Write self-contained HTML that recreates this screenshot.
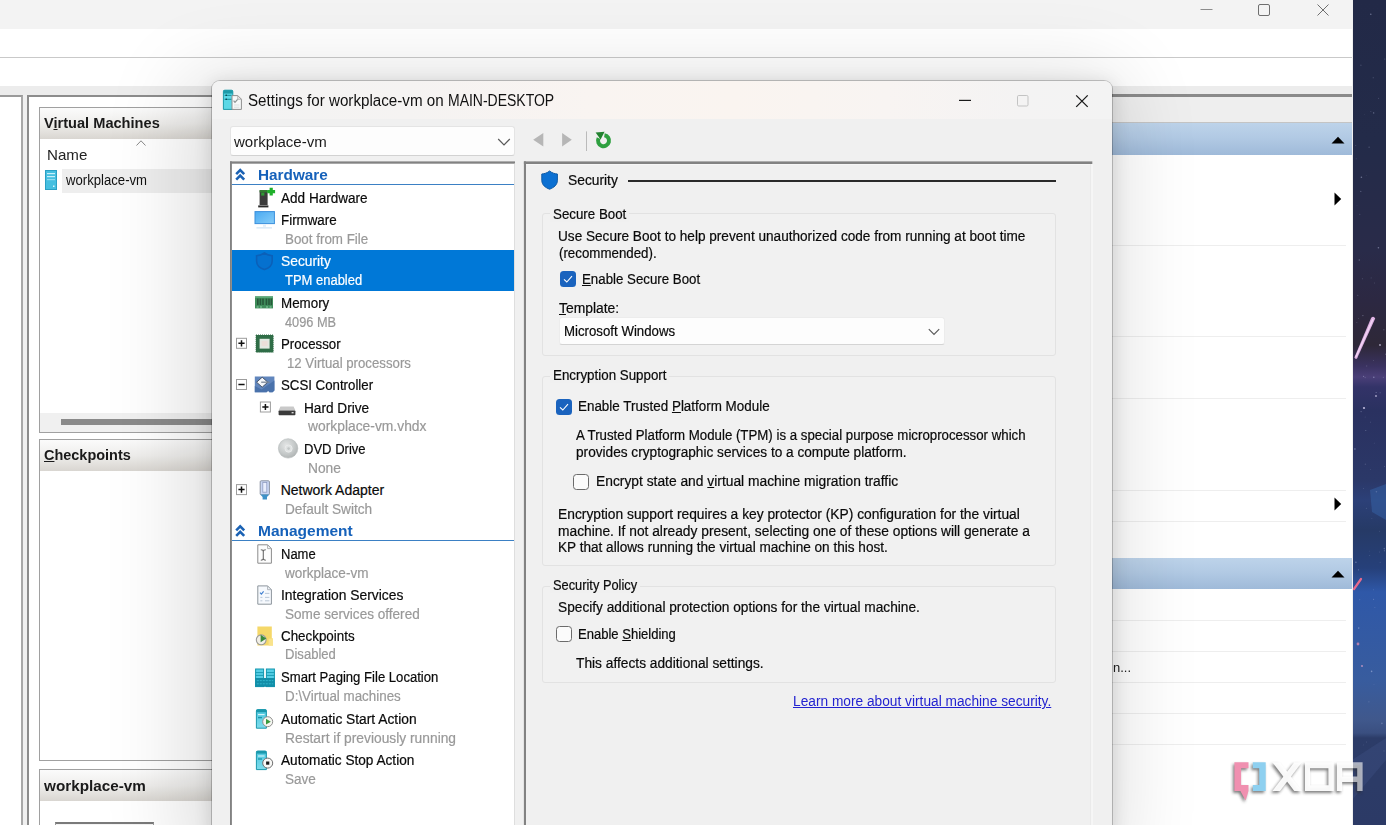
<!DOCTYPE html>
<html>
<head>
<meta charset="utf-8">
<title>Settings for workplace-vm on MAIN-DESKTOP</title>
<style>
html,body{margin:0;padding:0;}
body{width:1386px;height:825px;overflow:hidden;position:relative;background:#1d2442;font-family:"Liberation Sans",sans-serif;font-size:13px;color:#111;}
.abs{position:absolute;}
.t{position:absolute;white-space:nowrap;line-height:16px;height:16px;transform-origin:0 0;}
/* wallpaper */
#wall{left:1352px;top:0;width:34px;height:825px;background:linear-gradient(180deg,#1b2340 0%,#1f2644 25%,#2b2a4b 42%,#26315a 55%,#2a4a83 72%,#2c4f8a 85%,#3a4a78 100%);}
/* main window */
#main{left:0;top:0;width:1353px;height:825px;background:#f0f0f0;overflow:hidden;}
#mtitle{left:0;top:0;width:1352px;height:29px;background:#f3f3f3;}
#mmenu{left:0;top:29px;width:1352px;height:28px;background:#fff;}
#msep{left:0;top:57px;width:1352px;height:1px;background:#c9c9c9;}
#mtool{left:0;top:58px;width:1352px;height:28px;background:#fff;}
/* left panels */
.phead{position:absolute;left:39px;width:180px;height:30px;background:linear-gradient(180deg,#fbfbfb 0%,#efeeec 50%,#d9d6d1 100%);border-top:1px solid #a0a0a0;border-left:1px solid #a0a0a0;box-sizing:border-box;}
.pbody{position:absolute;left:39px;width:180px;background:#fff;border-left:1px solid #a0a0a0;border-bottom:1px solid #a0a0a0;box-sizing:border-box;}
.ptitle{font-weight:bold;font-size:14px;color:#1a1a1a;}

.ahead{left:1100px;width:252px;background:linear-gradient(180deg,#bdd3ea 0%,#b2cae4 45%,#9fbad9 100%);}
.asep{left:1100px;width:246px;height:1px;background:#eeeeee;}
/* dialog */
#dlg{left:212px;top:81px;width:900px;height:760px;background:#f0f0f0;border-radius:8px;box-shadow:0 0 0 1px rgba(0,0,0,.20),0 3px 18px 1px rgba(0,0,0,.13),-10px 14px 80px 20px rgba(0,0,0,.13);}
#dtitle{left:0;top:0;width:900px;height:38px;background:linear-gradient(90deg,#f3f3f3 0%,#f5f3f2 22%,#f9f4f1 42%,#faf4f0 58%,#f8f4f2 75%,#f4f3f3 90%,#f3f3f3 100%);border-radius:8px 8px 0 0;}

.gb{border:1px solid #e2e2e2;border-radius:3px;box-sizing:border-box;background:#f1f1f1;}
.gbl{background:#f0f0f0;}
.cbon{width:16px;height:16px;background:#1a63be;border-radius:3.5px;}
.cboff{width:16px;height:16px;background:#fbfbfb;border:1px solid #6b6b6b;border-radius:3.5px;box-sizing:border-box;}
</style>
</head>
<body>
<svg class="abs" style="left:1352px;top:0;" width="34" height="825" viewBox="1352 0 34 825">
  <defs>
    <linearGradient id="gwall" x1="0" y1="0" x2="0" y2="1">
      <stop offset="0.0000" stop-color="#222947"/>
      <stop offset="0.1697" stop-color="#232b49"/>
      <stop offset="0.3030" stop-color="#292b49"/>
      <stop offset="0.3636" stop-color="#2c2842"/>
      <stop offset="0.4182" stop-color="#2e2838"/>
      <stop offset="0.4436" stop-color="#3a3260"/>
      <stop offset="0.4570" stop-color="#4a3f78"/>
      <stop offset="0.4691" stop-color="#333368"/>
      <stop offset="0.4970" stop-color="#2a3160"/>
      <stop offset="0.5818" stop-color="#2b3868"/>
      <stop offset="0.6061" stop-color="#2c4078"/>
      <stop offset="0.6424" stop-color="#263a66"/>
      <stop offset="0.6885" stop-color="#26407a"/>
      <stop offset="0.7176" stop-color="#2f58a8"/>
      <stop offset="0.8242" stop-color="#385c9e"/>
      <stop offset="0.8727" stop-color="#40588c"/>
      <stop offset="0.8885" stop-color="#3a4f80"/>
      <stop offset="0.8945" stop-color="#2c3c68"/>
      <stop offset="1.0000" stop-color="#2c3a66"/>
    </linearGradient>
  </defs>
  <rect x="1352" y="0" width="34" height="825" fill="url(#gwall)"/>
  <path d="M1352 760 L1386 738 V760 L1352 800 Z" fill="#3a4c7e" opacity="0.5"/>
  <path d="M1370 490 L1386 484 V520 L1372 512 Z" fill="#3460a4" opacity="0.55"/>
  <circle cx="1364.4" cy="114.6" r="0.4" fill="#c8d0f0" opacity="0.18"/>
  <circle cx="1371.1" cy="277.9" r="0.4" fill="#c8d0f0" opacity="0.47"/>
  <circle cx="1360.9" cy="65.3" r="0.8" fill="#c8d0f0" opacity="0.17"/>
  <circle cx="1356.9" cy="322.6" r="0.4" fill="#c8d0f0" opacity="0.48"/>
  <circle cx="1374.2" cy="443.1" r="0.4" fill="#c8d0f0" opacity="0.35"/>
  <circle cx="1366.7" cy="742.0" r="0.4" fill="#c8d0f0" opacity="0.34"/>
  <circle cx="1358.3" cy="318.5" r="0.4" fill="#c8d0f0" opacity="0.35"/>
  <circle cx="1371.9" cy="518.3" r="0.4" fill="#c8d0f0" opacity="0.35"/>
  <circle cx="1374.4" cy="283.0" r="0.4" fill="#c8d0f0" opacity="0.35"/>
  <circle cx="1373.8" cy="377.3" r="0.8" fill="#c8d0f0" opacity="0.42"/>
  <circle cx="1368.9" cy="701.8" r="0.6" fill="#c8d0f0" opacity="0.25"/>
  <circle cx="1379.4" cy="531.2" r="0.5" fill="#c8d0f0" opacity="0.18"/>
  <circle cx="1363.6" cy="376.3" r="0.6" fill="#c8d0f0" opacity="0.41"/>
  <circle cx="1363.2" cy="744.9" r="0.4" fill="#c8d0f0" opacity="0.33"/>
  <circle cx="1359.3" cy="260.0" r="0.8" fill="#c8d0f0" opacity="0.30"/>
  <circle cx="1384.8" cy="59.0" r="0.6" fill="#c8d0f0" opacity="0.27"/>
  <circle cx="1365.2" cy="377.5" r="0.8" fill="#c8d0f0" opacity="0.17"/>
  <circle cx="1357.0" cy="205.2" r="0.4" fill="#c8d0f0" opacity="0.17"/>
  <circle cx="1376.4" cy="491.8" r="0.8" fill="#c8d0f0" opacity="0.25"/>
  <circle cx="1366.3" cy="508.2" r="0.4" fill="#c8d0f0" opacity="0.48"/>
  <circle cx="1365.4" cy="464.3" r="0.8" fill="#c8d0f0" opacity="0.17"/>
  <circle cx="1378.6" cy="98.3" r="0.5" fill="#c8d0f0" opacity="0.29"/>
  <circle cx="1383.3" cy="377.3" r="0.5" fill="#c8d0f0" opacity="0.31"/>
  <circle cx="1371.6" cy="671.4" r="0.8" fill="#c8d0f0" opacity="0.45"/>
  <circle cx="1362.9" cy="315.6" r="0.6" fill="#c8d0f0" opacity="0.39"/>
  <circle cx="1366.2" cy="175.4" r="0.4" fill="#c8d0f0" opacity="0.21"/>
  <circle cx="1361.4" cy="177.3" r="0.8" fill="#c8d0f0" opacity="0.44"/>
  <circle cx="1359.8" cy="214.3" r="0.5" fill="#c8d0f0" opacity="0.30"/>
  <circle cx="1365.8" cy="430.4" r="0.5" fill="#c8d0f0" opacity="0.39"/>
  <circle cx="1370.5" cy="469.4" r="0.4" fill="#c8d0f0" opacity="0.31"/>
  <circle cx="1381.9" cy="723.4" r="0.8" fill="#c8d0f0" opacity="0.29"/>
  <circle cx="1366.6" cy="366.0" r="0.8" fill="#c8d0f0" opacity="0.17"/>
  <circle cx="1356.2" cy="158.7" r="0.5" fill="#c8d0f0" opacity="0.19"/>
  <circle cx="1373.2" cy="77.8" r="0.5" fill="#c8d0f0" opacity="0.34"/>
  <circle cx="1384.4" cy="466.4" r="0.4" fill="#c8d0f0" opacity="0.46"/>
  <circle cx="1373.7" cy="112.9" r="0.6" fill="#c8d0f0" opacity="0.48"/>
  <circle cx="1373.3" cy="360.4" r="0.4" fill="#c8d0f0" opacity="0.45"/>
  <circle cx="1385.8" cy="354.2" r="0.8" fill="#c8d0f0" opacity="0.26"/>
  <circle cx="1358.6" cy="569.8" r="0.6" fill="#c8d0f0" opacity="0.32"/>
  <circle cx="1376.1" cy="392.4" r="0.5" fill="#c8d0f0" opacity="0.48"/>
  <circle cx="1370.9" cy="111.4" r="0.4" fill="#c8d0f0" opacity="0.42"/>
  <circle cx="1363.5" cy="488.6" r="0.4" fill="#c8d0f0" opacity="0.39"/>
  <circle cx="1362.4" cy="278.7" r="0.5" fill="#c8d0f0" opacity="0.27"/>
  <circle cx="1361.1" cy="411.6" r="0.6" fill="#c8d0f0" opacity="0.37"/>
  <circle cx="1373.6" cy="599.2" r="0.5" fill="#c8d0f0" opacity="0.43"/>
  <circle cx="1380.2" cy="562.3" r="0.5" fill="#c8d0f0" opacity="0.22"/>
  <circle cx="1369.8" cy="555.6" r="0.4" fill="#c8d0f0" opacity="0.43"/>
  <circle cx="1369.1" cy="147.2" r="0.6" fill="#c8d0f0" opacity="0.31"/>
  <circle cx="1384.0" cy="750.9" r="0.6" fill="#c8d0f0" opacity="0.18"/>
  <circle cx="1357.3" cy="357.3" r="0.6" fill="#c8d0f0" opacity="0.22"/>
  <circle cx="1374.0" cy="684.2" r="0.4" fill="#c8d0f0" opacity="0.32"/>
  <circle cx="1374.9" cy="607.7" r="0.4" fill="#c8d0f0" opacity="0.44"/>
  <circle cx="1357.8" cy="295.3" r="0.5" fill="#c8d0f0" opacity="0.32"/>
  <circle cx="1359.7" cy="599.7" r="0.6" fill="#c8d0f0" opacity="0.18"/>
  <circle cx="1384.3" cy="548.6" r="0.8" fill="#c8d0f0" opacity="0.29"/>
  <circle cx="1384.3" cy="550.8" r="0.5" fill="#c8d0f0" opacity="0.50"/>
  <circle cx="1354.9" cy="449.0" r="0.8" fill="#c8d0f0" opacity="0.43"/>
  <circle cx="1358.7" cy="628.1" r="0.8" fill="#c8d0f0" opacity="0.38"/>
  <circle cx="1365.2" cy="417.0" r="0.5" fill="#c8d0f0" opacity="0.16"/>
  <circle cx="1379.6" cy="552.0" r="0.4" fill="#c8d0f0" opacity="0.33"/>
  <circle cx="1383.9" cy="329.7" r="0.5" fill="#c8d0f0" opacity="0.44"/>
  <circle cx="1360.8" cy="191.4" r="0.6" fill="#c8d0f0" opacity="0.33"/>
  <circle cx="1378.4" cy="247.8" r="0.8" fill="#c8d0f0" opacity="0.44"/>
  <circle cx="1355.9" cy="562.3" r="0.8" fill="#c8d0f0" opacity="0.38"/>
  <circle cx="1380.1" cy="392.7" r="0.5" fill="#c8d0f0" opacity="0.34"/>
  <circle cx="1370.8" cy="14.2" r="0.8" fill="#c8d0f0" opacity="0.42"/>
  <circle cx="1373.5" cy="589.8" r="0.5" fill="#c8d0f0" opacity="0.21"/>
  <circle cx="1369.2" cy="551.1" r="0.4" fill="#c8d0f0" opacity="0.26"/>
  <circle cx="1370.6" cy="422.1" r="0.4" fill="#c8d0f0" opacity="0.46"/>
  <circle cx="1355.8" cy="145.4" r="0.4" fill="#c8d0f0" opacity="0.42"/>
  <path d="M1354.4 357.6 L1371.2 317.8 Q1373.6 315.6 1375.2 318.4 L1357 358.6 Q1355.4 359.6 1354.4 357.6 Z" fill="#ddb0e2"/>
  <path d="M1356 356.6 L1372.8 319.4" stroke="#f2d4f4" stroke-width="1.4" stroke-linecap="round"/>
  <path d="M1354 589 L1361 579" stroke="#e86a8c" stroke-width="2.2" stroke-linecap="round"/>
  <circle cx="1358" cy="644" r="1.4" fill="#d48ab0" opacity="0.8"/><circle cx="1362" cy="666" r="1.1" fill="#d8a0c8" opacity="0.7"/>
  <circle cx="1364" cy="408" r="1.1" fill="#e0d8f8" opacity="0.8"/><circle cx="1376" cy="396" r="0.9" fill="#e0d8f8" opacity="0.7"/><circle cx="1380" cy="345" r="0.9" fill="#e0d8f8" opacity="0.7"/>
</svg>
<div id="main" class="abs">
  <div id="mtitle" class="abs"></div>
  <div id="mmenu" class="abs"></div>
  <div id="msep" class="abs"></div>
  <div id="mtool" class="abs"></div>

  <div class="abs" style="left:0;top:86px;width:1352px;height:9px;background:#ececec;"></div>
  <!-- left tree pane -->
  <div class="abs" style="left:0;top:95px;width:21px;height:740px;background:#fff;border-top:2px solid #9a9a9a;border-right:2px solid #a8a8a8;"></div>
  <!-- center pane -->
  <div class="abs" style="left:27px;top:95px;width:1090px;height:740px;background:#fff;border-top:2px solid #8c8c8c;border-left:2px solid #8c8c8c;"></div>
  <!-- Virtual Machines panel -->
  <div class="phead" style="top:107px;height:32px;"></div>
  <div class="pbody" style="top:139px;height:294px;"></div>
  <svg class="abs" style="left:135px;top:139px;" width="12" height="8" viewBox="0 0 12 8"><path d="M1.5 6.5 L6 1.8 L10.5 6.5" fill="none" stroke="#8a8a8a" stroke-width="1"/></svg>
  <div class="abs" style="left:62px;top:169px;width:160px;height:24px;background:#eeeeee;"></div>
  <svg class="abs" style="left:45px;top:170px;" width="13" height="21" viewBox="0 0 13 21"><rect x="0.5" y="0.5" width="11" height="19" fill="#45bfe0" stroke="#2a9fc4"/><rect x="2" y="3" width="8" height="1.2" fill="#c8f0fa"/><rect x="2" y="6" width="8" height="1.2" fill="#c8f0fa"/><rect x="2" y="9" width="8" height="1.2" fill="#8fdcf0"/><rect x="8" y="15.5" width="1.5" height="1.5" fill="#d8f6ff"/></svg>
  <div class="abs" style="left:40px;top:413px;width:180px;height:19px;background:#f0f0f0;"></div>
  <div class="abs" style="left:61px;top:419px;width:160px;height:6px;background:#8a8a8a;"></div>
  <!-- Checkpoints panel -->
  <div class="phead" style="top:439px;height:32px;"></div>
  <div class="pbody" style="top:471px;height:290px;"></div>
  <!-- workplace-vm panel -->
  <div class="phead" style="top:769px;height:32px;"></div>
  <div class="pbody" style="top:801px;height:40px;"></div>
  <div class="abs" style="left:55px;top:822px;width:99px;height:10px;border-top:2px solid #7a7a7a;border-left:1px solid #9a9a9a;border-right:1px solid #9a9a9a;box-sizing:border-box;background:#f4f4f4;"></div>


  <!-- right action pane -->
  <div class="abs" style="left:1100px;top:94px;width:252px;height:3px;background:#8a8a8a;"></div>
  <div class="abs" style="left:1100px;top:97px;width:252px;height:25px;background:#eeeeee;"></div>
  <div class="abs" style="left:1100px;top:122px;width:252px;height:1px;background:#c4c4c4;"></div>
  <div class="abs" style="left:1100px;top:123px;width:252px;height:710px;background:#fff;"></div>
  <div class="abs ahead" style="top:123px;height:32px;"></div>
  <div class="abs ahead" style="top:558px;height:31px;"></div>
  <svg class="abs" style="left:1331px;top:136px;" width="14" height="8" viewBox="0 0 14 8"><path d="M0.5 7.5 L7 0.8 L13.5 7.5 Z" fill="#000"/></svg>
  <svg class="abs" style="left:1331px;top:570px;" width="14" height="8" viewBox="0 0 14 8"><path d="M0.5 7.5 L7 0.8 L13.5 7.5 Z" fill="#000"/></svg>
  <svg class="abs" style="left:1334px;top:192px;" width="8" height="14" viewBox="0 0 8 14"><path d="M0.5 0.5 L7.2 7 L0.5 13.5 Z" fill="#000"/></svg>
  <svg class="abs" style="left:1334px;top:497px;" width="8" height="14" viewBox="0 0 8 14"><path d="M0.5 0.5 L7.2 7 L0.5 13.5 Z" fill="#000"/></svg>
  <div class="abs asep" style="top:245px;"></div>
  <div class="abs asep" style="top:336px;"></div>
  <div class="abs asep" style="top:398px;"></div>
  <div class="abs asep" style="top:490px;"></div>
  <div class="abs asep" style="top:521px;"></div>
  <div class="abs asep" style="top:620px;"></div>
  <div class="abs asep" style="top:651px;"></div>
  <div class="abs asep" style="top:682px;"></div>
  <div class="abs asep" style="top:713px;"></div>
  <div class="abs asep" style="top:744px;"></div>
  <!-- main window caption buttons -->
  <svg class="abs" style="left:1200px;top:0;" width="140" height="22" viewBox="0 0 140 22">
    <path d="M0.5 9.5 H12.5" stroke="#8c8c8c" stroke-width="1" fill="none"/>
    <rect x="58.5" y="4.5" width="11" height="11" rx="1.5" fill="none" stroke="#6e6e6e" stroke-width="1"/>
    <path d="M117.5 4.5 L128.5 15.5 M128.5 4.5 L117.5 15.5" stroke="#6e6e6e" stroke-width="1" fill="none"/>
  </svg>

  <div class="t" style="left:44.12px;top:114.10px;font-size:15px;line-height:18px;height:18px;transform:scaleX(0.9732);font-weight:bold;color:#1a1a1a;">V<u>i</u>rtual Machines</div>
  <div class="t" style="left:46.59px;top:146.30px;font-size:15px;line-height:18px;height:18px;transform:scaleX(1.0074);color:#222;">Name</div>
  <div class="t" style="left:66.21px;top:172.45px;font-size:14px;line-height:17px;height:17px;transform:scaleX(0.9388);color:#111;">workplace-vm</div>
  <div class="t" style="left:43.63px;top:446.30px;font-size:15px;line-height:18px;height:18px;transform:scaleX(0.9634);font-weight:bold;color:#1a1a1a;"><u>C</u>heckpoints</div>
  <div class="t" style="left:44.08px;top:776.60px;font-size:15px;line-height:18px;height:18px;transform:scaleX(1.0178);font-weight:bold;color:#1a1a1a;">workplace-vm</div>
  <div class="t" style="left:1112.72px;top:660.12px;font-size:13.5px;line-height:16px;height:16px;transform:scaleX(0.9623);color:#222;">n...</div>
</div>
<div id="dlg" class="abs">
  <div id="dtitle" class="abs"></div>
  <!-- caption buttons -->
  <svg class="abs" style="left:740px;top:8px;" width="150" height="24" viewBox="0 0 150 24">
    <path d="M7 11.4 H19" stroke="#1a1a1a" stroke-width="1.2" fill="none"/>
    <rect x="65.5" y="6.5" width="10.5" height="10.5" rx="1.2" fill="none" stroke="#c3c3c3" stroke-width="1"/>
    <path d="M124.2 6.4 L135.7 17.9 M135.7 6.4 L124.2 17.9" stroke="#1a1a1a" stroke-width="1.3" fill="none"/>
  </svg>
  <!-- vm dropdown -->
  <div class="abs" style="left:18px;top:45px;width:285px;height:30px;background:#fdfdfd;border:1px solid #e4e4e4;border-bottom-color:#d2d2d2;border-radius:3px;box-sizing:border-box;"></div>
  <svg class="abs" style="left:285px;top:56px;" width="14" height="10" viewBox="0 0 14 10"><path d="M1.2 2 L7 7.8 L12.8 2" fill="none" stroke="#5a5a5a" stroke-width="1.2"/></svg>
  <!-- tree panel -->
  <div class="abs" style="left:18px;top:81px;width:285px;height:700px;background:#fff;"></div>
  <div class="abs" style="left:20px;top:103px;width:283px;height:1px;background:#3b80c4;"></div>
  <div class="abs" style="left:20px;top:459px;width:283px;height:1px;background:#3b80c4;"></div>
  <div class="abs" style="left:20px;top:169px;width:283px;height:41px;background:#0078d7;"></div>
  <!-- right panel -->
  <div class="abs" style="left:312px;top:81px;width:569px;height:700px;background:#f0f0f0;"></div>
  <div class="abs" style="left:416px;top:99px;width:428px;height:1.5px;background:#2a2a2a;"></div>
  <!-- group boxes -->
  <div class="abs gb" style="left:330px;top:132.4px;width:514px;height:142.8px;"></div>
  <div class="abs gb" style="left:330px;top:294.5px;width:514px;height:190.9px;"></div>
  <div class="abs gb" style="left:330px;top:504.6px;width:514px;height:97px;"></div>
  <div class="abs gbl" style="left:338px;top:125px;width:79px;height:16px;"></div>
  <div class="abs gbl" style="left:338px;top:286px;width:119px;height:16px;"></div>
  <div class="abs gbl" style="left:338px;top:496px;width:90px;height:16px;"></div>
  <!-- template dropdown -->
  <div class="abs" style="left:347px;top:236.4px;width:386px;height:28px;background:#fdfdfd;border:1px solid #ececec;border-bottom-color:#d4d4d4;border-radius:3px;box-sizing:border-box;"></div>
  <svg class="abs" style="left:715px;top:246px;" width="14" height="10" viewBox="0 0 14 10"><path d="M1.8 2.2 L7 7.4 L12.2 2.2" fill="none" stroke="#5a5a5a" stroke-width="1.2"/></svg>
  <!-- checkboxes -->
  <div class="abs cbon" style="left:348px;top:190.4px;"></div>
  <svg class="abs" style="left:348px;top:190.4px;" width="16" height="16" viewBox="0 0 16 16"><path d="M4 8.3 L6.8 11 L12 5.2" fill="none" stroke="#fff" stroke-width="1.1"/></svg>
  <div class="abs cbon" style="left:344px;top:318px;"></div>
  <svg class="abs" style="left:344px;top:318px;" width="16" height="16" viewBox="0 0 16 16"><path d="M4 8.3 L6.8 11 L12 5.2" fill="none" stroke="#fff" stroke-width="1.1"/></svg>
  <div class="abs cboff" style="left:361px;top:393px;"></div>
  <div class="abs cboff" style="left:344px;top:545px;"></div>
  <svg class="abs" style="left:0;top:0;" width="900" height="744" viewBox="212 81 900 744">
    <defs>
      <linearGradient id="gmon" x1="0" y1="0" x2="1" y2="1"><stop offset="0" stop-color="#4aaaf2"/><stop offset="1" stop-color="#86cdf9"/></linearGradient>
      <radialGradient id="gdvd" cx="0.4" cy="0.35" r="0.7"><stop offset="0" stop-color="#e4e6e6"/><stop offset="0.6" stop-color="#c6caca"/><stop offset="1" stop-color="#aeb2b2"/></radialGradient>
      <linearGradient id="gsrv" x1="0" y1="0" x2="0" y2="1"><stop offset="0" stop-color="#4cc6de"/><stop offset="1" stop-color="#7ddcec"/></linearGradient>
    </defs>
    <!-- panel frames -->
    <g>
      <rect x="230" y="161.4" width="285" height="2.3" fill="#828282"/>
      <rect x="230" y="161.4" width="1.9" height="670" fill="#828282"/>
      <rect x="514" y="163.7" width="1" height="670" fill="#dedede"/>
      <rect x="523.9" y="161.4" width="568.4" height="2.6" fill="#828282"/>
      <rect x="523.9" y="161.4" width="2.1" height="670" fill="#828282"/>
      <rect x="526" y="164" width="566" height="0.6" fill="#fafafa"/>
      <rect x="1091.2" y="164" width="1.3" height="670" fill="#fbfbfb"/>
      <rect x="1090.2" y="164" width="1" height="670" fill="#e9e9e9"/>
    </g>
    <!-- section chevrons -->
    <g fill="none" stroke="#1b62b4" stroke-width="2.6">
      <path d="M236.2 174.2 L240.2 170.2 L244.2 174.2"/><path d="M236.2 179.6 L240.2 175.6 L244.2 179.6"/>
      <path d="M236.2 530.4 L240.2 526.4 L244.2 530.4"/><path d="M236.2 535.8 L240.2 531.8 L244.2 535.8"/>
    </g>
    <!-- Add Hardware -->
    <g>
      <rect x="259.6" y="190.2" width="8" height="14.8" fill="#3b3b3b"/>
      <rect x="259.6" y="190.2" width="8" height="2.2" fill="#2f7d2f"/>
      <rect x="261.2" y="192.6" width="3.2" height="3" fill="#2f9a33"/>
      <rect x="258.2" y="205.4" width="10.2" height="2" fill="#2a2a2a"/>
      <path d="M269.6 187.8 h3.2 v2.3 h2.3 v3.2 h-2.3 v2.3 h-3.2 v-2.3 h-2.3 v-3.2 h2.3 Z" fill="#1fb02a"/>
    </g>
    <!-- Firmware -->
    <g>
      <rect x="255" y="211.6" width="19.4" height="12" fill="url(#gmon)" stroke="#3b8fdc" stroke-width="1"/>
      <rect x="256.4" y="227.4" width="15.6" height="1" fill="#c9dff2"/>
      <rect x="263" y="224.4" width="3" height="2.4" fill="#e3eef8"/>
    </g>
    <!-- Security (selected) -->
    <path d="M264.4 253 C261.8 255 259 255.6 256.6 255.8 V261 C256.6 265.4 260 268.2 264.4 269.6 C268.8 268.2 272.2 265.4 272.2 261 V255.8 C269.8 255.6 267 255 264.4 253 Z" fill="#0571cf" stroke="#0b60b8" stroke-width="1.6"/>
    <!-- Memory -->
    <g>
      <rect x="255" y="296.4" width="18" height="12" fill="#3f8c5a"/>
      <rect x="255" y="296.4" width="18" height="1.6" fill="#5aa878"/>
      <g fill="#27583a"><rect x="257" y="298.6" width="1.6" height="6.4"/><rect x="259.6" y="298.6" width="1.6" height="6.4"/><rect x="262.2" y="298.6" width="1.6" height="6.4"/><rect x="265.6" y="298.6" width="1.6" height="6.4"/><rect x="268.2" y="298.6" width="1.6" height="6.4"/><rect x="270.6" y="298.6" width="1.4" height="6.4"/></g>
      <g fill="#7fc49a"><rect x="256.6" y="306.4" width="2" height="1.2"/><rect x="260" y="306.4" width="2" height="1.2"/><rect x="266" y="306.4" width="2" height="1.2"/><rect x="269.6" y="306.4" width="2" height="1.2"/></g>
    </g>
    <!-- expand boxes -->
    <g fill="#fff" stroke="#9d9d9d" stroke-width="1">
      <rect x="236.5" y="338.3" width="10" height="10"/><rect x="236.5" y="379.5" width="10" height="10"/><rect x="260.4" y="402" width="10" height="10"/><rect x="236.5" y="484.6" width="10" height="10"/>
    </g>
    <g stroke="#111" stroke-width="1.5" fill="none">
      <path d="M238.4 343.3 H244.6 M241.5 340.2 V346.4"/>
      <path d="M238.4 384.5 H244.6"/>
      <path d="M262.3 407 H268.5 M265.4 403.9 V410.1"/>
      <path d="M238.4 489.6 H244.6 M241.5 486.5 V492.7"/>
    </g>
    <!-- Processor -->
    <g>
      <rect x="256" y="335" width="17.2" height="17.2" fill="#2f6d47" stroke="#2f6d47" stroke-width="1" stroke-dasharray="1 1"/>
      <rect x="256.4" y="335.4" width="16.4" height="16.4" fill="#2f6d47"/>
      <rect x="259.6" y="338.8" width="10" height="9.8" fill="#e3e9e2"/>
      <rect x="261.6" y="341" width="6" height="5" fill="#ebdfd9"/>
    </g>
    <!-- SCSI Controller -->
    <g>
      <path d="M254.8 376.4 H274.4 V390.6 L272.6 392.2 H269.4 L268.2 390.8 L266.6 392.2 H254.8 Z" fill="#6186bd"/>
      <path d="M254.8 386 L261.6 389.4 L274.4 380.6 V390.6 L272.6 392.2 H269.4 L268.2 390.8 L266.6 392.2 H254.8 Z" fill="#4a72ab"/>
      <path d="M256.6 382.2 L262.2 377.2 L267.8 382.2 L262.2 387.2 Z" fill="#f4f6fa" stroke="#3c4a5c" stroke-width="0.9"/>
      <path d="M261.2 382.2 H269.4" stroke="#7a8696" stroke-width="1.3"/>
    </g>
    <!-- Hard drive -->
    <g>
      <path d="M280.4 406.6 H293.6 L295.4 410.6 H278.6 Z" fill="#c9c9c9"/>
      <rect x="278.6" y="410.4" width="16.8" height="4.8" rx="0.8" fill="#3a3a3a"/>
      <rect x="291.6" y="412" width="2" height="1.4" fill="#d8d8d8"/>
    </g>
    <!-- DVD -->
    <g>
      <circle cx="288.1" cy="448.4" r="9.7" fill="url(#gdvd)" stroke="#b4b8b8" stroke-width="0.6"/>
      <circle cx="288.6" cy="448.6" r="3.6" fill="#dfe2e2" stroke="#eceeee" stroke-width="0.8"/>
      <circle cx="288.6" cy="448.6" r="1.3" fill="#c2c6c6"/>
    </g>
    <!-- Network adapter -->
    <g>
      <rect x="260.2" y="480.8" width="9.2" height="14" rx="1" fill="#c9d6f4" stroke="#8a93a2" stroke-width="1"/>
      <rect x="262.8" y="482.4" width="4" height="9.8" fill="#e8eefc" stroke="#8f9cc0" stroke-width="0.8"/>
      <path d="M260.4 494.6 H269.2 L267 497 V499.6 H262.6 V497 Z" fill="#3f92c8"/>
    </g>
    <!-- Name -->
    <g>
      <path d="M257.8 544.8 H267.6 L271.4 548.6 V563.2 H257.8 Z" fill="#fdfdfd" stroke="#8c8c8c" stroke-width="1"/>
      <path d="M267.6 544.8 V548.6 H271.4" fill="none" stroke="#a8a8a8" stroke-width="0.9"/>
      <path d="M260.8 549.8 C262.4 549.8 263.3 550.4 263.3 551.4 V558.6 C263.3 559.6 262.4 560.2 260.8 560.2 M265.8 549.8 C264.2 549.8 263.3 550.4 263.3 551.4 M265.8 560.2 C264.2 560.2 263.3 559.6 263.3 558.6" fill="none" stroke="#6c6c6c" stroke-width="1.1"/>
    </g>
    <!-- Integration services -->
    <g>
      <path d="M257.8 585.9 H267.6 L271.4 589.7 V604.2 H257.8 Z" fill="#f6f9fd" stroke="#8c949c" stroke-width="1"/>
      <path d="M267.6 585.9 V589.7 H271.4" fill="none" stroke="#a8aeb4" stroke-width="0.9"/>
      <path d="M260 592.6 L261.4 594.2 L263.6 591.4" fill="none" stroke="#3f7fd0" stroke-width="1.1"/>
      <path d="M265 593.4 H269.4 M260.4 597.4 H262.4 M265 597.4 H269.4 M260.4 600.8 H262.4 M265 600.8 H269.4" stroke="#b4c2d2" stroke-width="0.9"/>
    </g>
    <!-- Checkpoints -->
    <g>
      <path d="M257.4 626.6 H271.8 V638.6 H273 V645.6 H257.4 Z" fill="#f5d869"/>
      <path d="M268.6 638.6 H273 V645.6 H268.6 Z" fill="#f9e38c"/>
      <circle cx="261.2" cy="639.8" r="4.9" fill="#f1efe6" stroke="#9a9a98" stroke-width="1.1"/>
      <path d="M260.6 634.8 L266.4 638.6 L260.6 642.2 Z" fill="#3b8a3b"/>
    </g>
    <!-- Smart paging -->
    <g>
      <rect x="255.6" y="669" width="8" height="17.6" fill="#56cfe6" stroke="#1396ae" stroke-width="1"/>
      <rect x="266.4" y="669" width="8" height="17.6" fill="#56cfe6" stroke="#1396ae" stroke-width="1"/>
      <path d="M255.6 672.6 H263.6 M266.4 672.6 H274.4 M255.6 675.4 H263.6 M266.4 675.4 H274.4" stroke="#1396ae" stroke-width="0.9"/>
      <rect x="255.1" y="678" width="19.8" height="8.8" fill="#128ea8"/>
      <path d="M256.8 680.6 H273.2 M256.8 683.8 H273.2" stroke="#2fb4cc" stroke-width="1" stroke-dasharray="2 1"/>
    </g>
    <!-- Auto start -->
    <g>
      <path d="M256.4 711 Q256.4 709.6 257.8 709.6 H265 Q266.4 709.6 266.4 711 V728.2 H256.4 Z" fill="url(#gsrv)" stroke="#1a98ac" stroke-width="1"/>
      <rect x="256.4" y="709.6" width="10" height="2.6" fill="#1a98ac"/>
      <path d="M258 714.6 H264.6" stroke="#e2f8fc" stroke-width="1"/>
      <path d="M258 717.6 H262" stroke="#1a98ac" stroke-width="1.4"/>
      <circle cx="267.7" cy="721.7" r="5" fill="#f6f6f2" stroke="#8e8e8c" stroke-width="1"/>
      <path d="M266 718.8 L270.8 721.7 L266 724.6 Z" fill="#3a9a3c"/>
    </g>
    <!-- Auto stop -->
    <g>
      <path d="M256.4 752.4 Q256.4 751 257.8 751 H265 Q266.4 751 266.4 752.4 V769.6 H256.4 Z" fill="url(#gsrv)" stroke="#1a98ac" stroke-width="1"/>
      <rect x="256.4" y="751" width="10" height="2.6" fill="#1a98ac"/>
      <path d="M258 756 H264.6" stroke="#e2f8fc" stroke-width="1"/>
      <path d="M258 759 H262" stroke="#1a98ac" stroke-width="1.4"/>
      <circle cx="267.7" cy="763.1" r="5" fill="#f8f8f6" stroke="#6e6e6e" stroke-width="1"/>
      <rect x="266.1" y="761.5" width="3.2" height="3.2" fill="#1a1a1a"/>
    </g>
    <!-- right panel shield -->
    <path d="M549.6 171 C547.2 173 544.4 173.8 541.8 174 V180.2 C541.8 185 545.4 187.6 549.6 189.2 C553.8 187.6 557.4 185 557.4 180.2 V174 C554.8 173.8 552 173 549.6 171 Z" fill="#0b70d2" stroke="#0e5aa6" stroke-width="1"/>
    <!-- title icon -->
    <g>
      <path d="M223.4 91.6 Q223.4 90.2 224.8 90.2 H231.4 Q232.8 90.2 232.8 91.6 V109.4 H223.4 Z" fill="#5cd8e6" stroke="#1d9aa8" stroke-width="1"/>
      <rect x="223.4" y="90.2" width="9.4" height="3.4" fill="#1d9aa8"/>
      <path d="M224.6 95.4 H231.6 M224.6 99.4 H231.6" stroke="#1d9aa8" stroke-width="1.2"/>
      <rect x="225.6" y="94.6" width="1.4" height="1.4" fill="#0c4a54"/><rect x="225.6" y="98.6" width="1.4" height="1.4" fill="#0c4a54"/>
      <path d="M232 95.6 H237.8 L241.4 99.2 V109.4 H232 Z" fill="#f7f9f9" stroke="#8e8e8e" stroke-width="1"/>
      <path d="M237.8 95.6 V99.2 H241.4" fill="none" stroke="#a6a6a6" stroke-width="0.9"/>
      <path d="M233.6 100.6 L235 102.4 L237.6 99.4" fill="none" stroke="#8a9494" stroke-width="1.2"/>
      <path d="M234 105 H239.4 M234 107.2 H239.4" stroke="#d4dcdc" stroke-width="0.8"/>
    </g>
    <!-- nav arrows + refresh -->
    <path d="M543.3 132.9 L533.2 139.7 L543.3 146.6 Z" fill="#b6b6b6"/>
    <path d="M562.1 132.9 L571.8 139.7 L562.1 146.6 Z" fill="#b6b6b6"/>
    <path d="M586.5 131.4 V151" stroke="#bababa" stroke-width="1"/>
    <g>
      <path d="M604.4 135.2 A5.5 5.5 0 1 1 598.6 138.2" fill="none" stroke="#2fa040" stroke-width="4"/>
      <path d="M595.6 132.4 L604.6 131.8 L600.6 139.6 Z" fill="#22822f"/>
    </g>
  </svg>

  <div class="t" style="left:36.49px;top:9.66px;font-size:16px;line-height:19px;height:19px;transform:scaleX(0.9482);color:#111;">Settings for workplace-vm on</div>
  <div class="t" style="left:235.56px;top:9.66px;font-size:16px;line-height:19px;height:19px;transform:scaleX(0.8739);color:#111;">MAIN-DESKTOP</div>
  <div class="t" style="left:22.10px;top:51.43px;font-size:15.5px;line-height:19px;height:19px;transform:scaleX(0.9707);color:#1a1a1a;">workplace-vm</div>
  <div class="t" style="left:46.08px;top:85.07px;font-size:14.8px;line-height:18px;height:18px;transform:scaleX(1.0354);color:#1561ba;font-weight:bold;">Hardware</div>
  <div class="t" style="left:46.07px;top:440.77px;font-size:14.8px;line-height:18px;height:18px;transform:scaleX(1.0465);color:#1561ba;font-weight:bold;">Management</div>
  <div class="t" style="left:69.19px;top:108.65px;font-size:14px;line-height:17px;height:17px;transform:scaleX(0.9679);color:#0a0a0a;-webkit-text-stroke:0.2px #0a0a0a;">Add Hardware</div>
  <div class="t" style="left:68.70px;top:130.95px;font-size:14px;line-height:17px;height:17px;transform:scaleX(0.9548);color:#0a0a0a;-webkit-text-stroke:0.2px #0a0a0a;">Firmware</div>
  <div class="t" style="left:72.60px;top:149.75px;font-size:14px;line-height:17px;height:17px;transform:scaleX(0.9548);color:#999;-webkit-text-stroke:0.2px #999;">Boot from File</div>
  <div class="t" style="left:68.67px;top:172.45px;font-size:14px;line-height:17px;height:17px;transform:scaleX(0.9857);color:#fff;-webkit-text-stroke:0.2px #fff;">Security</div>
  <div class="t" style="left:72.62px;top:191.45px;font-size:14px;line-height:17px;height:17px;transform:scaleX(0.9265);color:#fff;-webkit-text-stroke:0.2px #fff;">TPM enabled</div>
  <div class="t" style="left:68.70px;top:213.65px;font-size:14px;line-height:17px;height:17px;transform:scaleX(0.9554);color:#0a0a0a;-webkit-text-stroke:0.2px #0a0a0a;">Memory</div>
  <div class="t" style="left:73.23px;top:232.65px;font-size:14px;line-height:17px;height:17px;transform:scaleX(0.9123);color:#999;-webkit-text-stroke:0.2px #999;">4096 MB</div>
  <div class="t" style="left:68.71px;top:254.85px;font-size:14px;line-height:17px;height:17px;transform:scaleX(0.9454);color:#0a0a0a;-webkit-text-stroke:0.2px #0a0a0a;">Processor</div>
  <div class="t" style="left:74.71px;top:273.65px;font-size:14px;line-height:17px;height:17px;transform:scaleX(0.9439);color:#999;-webkit-text-stroke:0.2px #999;">12 Virtual processors</div>
  <div class="t" style="left:68.70px;top:295.95px;font-size:14px;line-height:17px;height:17px;transform:scaleX(0.9468);color:#0a0a0a;-webkit-text-stroke:0.2px #0a0a0a;">SCSI Controller</div>
  <div class="t" style="left:91.98px;top:318.75px;font-size:14px;line-height:17px;height:17px;transform:scaleX(0.9735);color:#0a0a0a;-webkit-text-stroke:0.2px #0a0a0a;">Hard Drive</div>
  <div class="t" style="left:96.37px;top:337.05px;font-size:14px;line-height:17px;height:17px;transform:scaleX(0.9886);color:#999;-webkit-text-stroke:0.2px #999;">workplace-vm.vhdx</div>
  <div class="t" style="left:92.02px;top:359.85px;font-size:14px;line-height:17px;height:17px;transform:scaleX(0.9310);color:#0a0a0a;-webkit-text-stroke:0.2px #0a0a0a;">DVD Drive</div>
  <div class="t" style="left:95.87px;top:378.65px;font-size:14px;line-height:17px;height:17px;transform:scaleX(0.9846);color:#999;-webkit-text-stroke:0.2px #999;">None</div>
  <div class="t" style="left:68.66px;top:400.95px;font-size:14px;line-height:17px;height:17px;color:#0a0a0a;-webkit-text-stroke:0.2px #0a0a0a;">Network Adapter</div>
  <div class="t" style="left:72.58px;top:419.85px;font-size:14px;line-height:17px;height:17px;transform:scaleX(0.9738);color:#999;-webkit-text-stroke:0.2px #999;">Default Switch</div>
  <div class="t" style="left:68.72px;top:464.85px;font-size:14px;line-height:17px;height:17px;transform:scaleX(0.9277);color:#0a0a0a;-webkit-text-stroke:0.2px #0a0a0a;">Name</div>
  <div class="t" style="left:72.59px;top:483.75px;font-size:14px;line-height:17px;height:17px;transform:scaleX(0.9660);color:#999;-webkit-text-stroke:0.2px #999;">workplace-vm</div>
  <div class="t" style="left:68.67px;top:506.05px;font-size:14px;line-height:17px;height:17px;transform:scaleX(0.9889);color:#0a0a0a;-webkit-text-stroke:0.2px #0a0a0a;">Integration Services</div>
  <div class="t" style="left:72.59px;top:525.05px;font-size:14px;line-height:17px;height:17px;transform:scaleX(0.9690);color:#999;-webkit-text-stroke:0.2px #999;">Some services offered</div>
  <div class="t" style="left:68.70px;top:547.15px;font-size:14px;line-height:17px;height:17px;transform:scaleX(0.9553);color:#0a0a0a;-webkit-text-stroke:0.2px #0a0a0a;">Checkpoints</div>
  <div class="t" style="left:72.62px;top:565.45px;font-size:14px;line-height:17px;height:17px;transform:scaleX(0.9336);color:#999;-webkit-text-stroke:0.2px #999;">Disabled</div>
  <div class="t" style="left:68.71px;top:588.45px;font-size:14px;line-height:17px;height:17px;transform:scaleX(0.9362);color:#0a0a0a;-webkit-text-stroke:0.2px #0a0a0a;">Smart Paging File Location</div>
  <div class="t" style="left:72.60px;top:607.45px;font-size:14px;line-height:17px;height:17px;transform:scaleX(0.9560);color:#999;-webkit-text-stroke:0.2px #999;">D:\Virtual machines</div>
  <div class="t" style="left:69.17px;top:629.85px;font-size:14px;line-height:17px;height:17px;transform:scaleX(0.9842);color:#0a0a0a;-webkit-text-stroke:0.2px #0a0a0a;">Automatic Start Action</div>
  <div class="t" style="left:72.57px;top:648.65px;font-size:14px;line-height:17px;height:17px;transform:scaleX(0.9857);color:#999;-webkit-text-stroke:0.2px #999;">Restart if previously running</div>
  <div class="t" style="left:69.18px;top:671.45px;font-size:14px;line-height:17px;height:17px;transform:scaleX(0.9735);color:#0a0a0a;-webkit-text-stroke:0.2px #0a0a0a;">Automatic Stop Action</div>
  <div class="t" style="left:72.59px;top:689.85px;font-size:14px;line-height:17px;height:17px;transform:scaleX(0.9655);color:#999;-webkit-text-stroke:0.2px #999;">Save</div>
  <div class="t" style="left:356.37px;top:91.30px;font-size:14px;line-height:17px;height:17px;transform:scaleX(0.9857);color:#0a0a0a;-webkit-text-stroke:0.2px #0a0a0a;">Security</div>
  <div class="t" style="left:340.90px;top:124.50px;font-size:14px;line-height:17px;height:17px;transform:scaleX(0.9511);color:#0a0a0a;-webkit-text-stroke:0.2px #0a0a0a;">Secure Boot</div>
  <div class="t" style="left:346.38px;top:147.00px;font-size:14px;line-height:17px;height:17px;transform:scaleX(0.9719);color:#0a0a0a;-webkit-text-stroke:0.2px #0a0a0a;">Use Secure Boot to help prevent unauthorized code from running at boot time</div>
  <div class="t" style="left:347.20px;top:164.40px;font-size:14px;line-height:17px;height:17px;transform:scaleX(0.9503);color:#0a0a0a;-webkit-text-stroke:0.2px #0a0a0a;">(recommended).</div>
  <div class="t" style="left:369.70px;top:190.00px;font-size:14px;line-height:17px;height:17px;transform:scaleX(0.9482);color:#0a0a0a;-webkit-text-stroke:0.2px #0a0a0a;"><u>E</u>nable Secure Boot</div>
  <div class="t" style="left:346.67px;top:218.90px;font-size:14px;line-height:17px;height:17px;transform:scaleX(0.9911);color:#0a0a0a;-webkit-text-stroke:0.2px #0a0a0a;"><u>T</u>emplate:</div>
  <div class="t" style="left:352.21px;top:242.00px;font-size:14px;line-height:17px;height:17px;transform:scaleX(0.9457);color:#0a0a0a;-webkit-text-stroke:0.2px #0a0a0a;">Microsoft Windows</div>
  <div class="t" style="left:340.60px;top:285.80px;font-size:14px;line-height:17px;height:17px;transform:scaleX(0.9532);color:#0a0a0a;-webkit-text-stroke:0.2px #0a0a0a;">Encryption Support</div>
  <div class="t" style="left:365.90px;top:317.20px;font-size:14px;line-height:17px;height:17px;transform:scaleX(0.9580);color:#0a0a0a;-webkit-text-stroke:0.2px #0a0a0a;">Enable Trusted <u>P</u>latform Module</div>
  <div class="t" style="left:364.20px;top:346.30px;font-size:14px;line-height:17px;height:17px;transform:scaleX(0.9473);color:#0a0a0a;-webkit-text-stroke:0.2px #0a0a0a;">A Trusted Platform Module (TPM) is a special purpose microprocessor which</div>
  <div class="t" style="left:364.18px;top:363.00px;font-size:14px;line-height:17px;height:17px;transform:scaleX(0.9746);color:#0a0a0a;-webkit-text-stroke:0.2px #0a0a0a;">provides cryptographic services to a compute platform.</div>
  <div class="t" style="left:383.67px;top:391.80px;font-size:14px;line-height:17px;height:17px;transform:scaleX(0.9864);color:#0a0a0a;-webkit-text-stroke:0.2px #0a0a0a;">Encrypt state and <u>v</u>irtual machine migration traffic</div>
  <div class="t" style="left:345.97px;top:425.10px;font-size:14px;line-height:17px;height:17px;transform:scaleX(0.9859);color:#0a0a0a;-webkit-text-stroke:0.2px #0a0a0a;">Encryption support requires a key protector (KP) configuration for the virtual</div>
  <div class="t" style="left:345.97px;top:441.60px;font-size:14px;line-height:17px;height:17px;transform:scaleX(0.9842);color:#0a0a0a;-webkit-text-stroke:0.2px #0a0a0a;">machine. If not already present, selecting one of these options will generate a</div>
  <div class="t" style="left:345.98px;top:457.60px;font-size:14px;line-height:17px;height:17px;transform:scaleX(0.9706);color:#0a0a0a;-webkit-text-stroke:0.2px #0a0a0a;">KP that allows running the virtual machine on this host.</div>
  <div class="t" style="left:340.63px;top:496.00px;font-size:14px;line-height:17px;height:17px;transform:scaleX(0.9164);color:#0a0a0a;-webkit-text-stroke:0.2px #0a0a0a;">Security Policy</div>
  <div class="t" style="left:345.98px;top:518.30px;font-size:14px;line-height:17px;height:17px;transform:scaleX(0.9789);color:#0a0a0a;-webkit-text-stroke:0.2px #0a0a0a;">Specify additional protection options for the virtual machine.</div>
  <div class="t" style="left:365.92px;top:545.00px;font-size:14px;line-height:17px;height:17px;transform:scaleX(0.9312);color:#0a0a0a;-webkit-text-stroke:0.2px #0a0a0a;">Enable <u>S</u>hielding</div>
  <div class="t" style="left:364.18px;top:573.70px;font-size:14px;line-height:17px;height:17px;transform:scaleX(0.9815);color:#0a0a0a;-webkit-text-stroke:0.2px #0a0a0a;">This affects additional settings.</div>
  <div class="t" style="left:581.18px;top:612.20px;font-size:14px;line-height:17px;height:17px;transform:scaleX(0.9799);color:#2323d0;text-decoration:underline;">Learn more about virtual machine security.</div>
</div>
<svg class="abs" style="left:1226px;top:754px;" width="150" height="56" viewBox="1226 754 150 56">
  <defs><filter id="xsh" x="-20%" y="-20%" width="140%" height="150%"><feGaussianBlur stdDeviation="1.5"/></filter></defs>
  <g opacity="0.6" filter="url(#xsh)" fill="#2c2c2c" transform="translate(-1.5 2)">
    <path d="M1234.4 762.3 H1248.5 V768.3 H1241.1 V785 H1248.5 V791 L1245.6 800.4 L1240.4 791 H1234.4 Z"/>
    <path d="M1252.8 762.3 H1265.7 V791 H1252.8 V785 H1259.2 V768.3 H1252.8 Z"/>
    <path d="M1272.4 762.3 H1280 L1301.9 791 H1294.3 Z"/><path d="M1294.3 762.3 H1301.9 L1280 791 H1272.4 Z"/>
    <path fill-rule="evenodd" d="M1305 762.3 H1333.8 V791 H1305 Z M1310 768.2 V785.2 H1328.4 V768.2 Z"/>
    <path fill-rule="evenodd" d="M1336.8 762.3 H1362.6 V791 H1357.2 V782 H1342.2 V791 H1336.8 Z M1342.2 768.2 V776.4 H1357.2 V768.2 Z"/>
  </g>
  <g fill="#f090b0"><path d="M1234.4 762.3 H1248.5 V768.3 H1241.1 V785 H1248.5 V791 L1245.6 800.4 L1240.4 791 H1234.4 Z"/></g>
  <g fill="#8ed0f0"><path d="M1252.8 762.3 H1265.7 V791 H1252.8 V785 H1259.2 V768.3 H1252.8 Z"/></g>
  <defs><clipPath id="cpl"><rect x="1226" y="754" width="127" height="56"/></clipPath><clipPath id="cpr"><rect x="1353" y="754" width="40" height="56"/></clipPath></defs>
  <g fill="#ffffff" opacity="0.95" clip-path="url(#cpl)">
    <path d="M1272.4 762.3 H1280 L1301.9 791 H1294.3 Z"/><path d="M1294.3 762.3 H1301.9 L1280 791 H1272.4 Z"/>
    <path fill-rule="evenodd" d="M1305 762.3 H1333.8 V791 H1305 Z M1310 768.2 V785.2 H1328.4 V768.2 Z"/>
    <path fill-rule="evenodd" d="M1336.8 762.3 H1362.6 V791 H1357.2 V782 H1342.2 V791 H1336.8 Z M1342.2 768.2 V776.4 H1357.2 V768.2 Z"/>
  </g>
  <g fill="#ffffff" opacity="0.6" clip-path="url(#cpr)">
    <path d="M1272.4 762.3 H1280 L1301.9 791 H1294.3 Z"/><path d="M1294.3 762.3 H1301.9 L1280 791 H1272.4 Z"/>
    <path fill-rule="evenodd" d="M1305 762.3 H1333.8 V791 H1305 Z M1310 768.2 V785.2 H1328.4 V768.2 Z"/>
    <path fill-rule="evenodd" d="M1336.8 762.3 H1362.6 V791 H1357.2 V782 H1342.2 V791 H1336.8 Z M1342.2 768.2 V776.4 H1357.2 V768.2 Z"/>
  </g>
</svg>
</body>
</html>
